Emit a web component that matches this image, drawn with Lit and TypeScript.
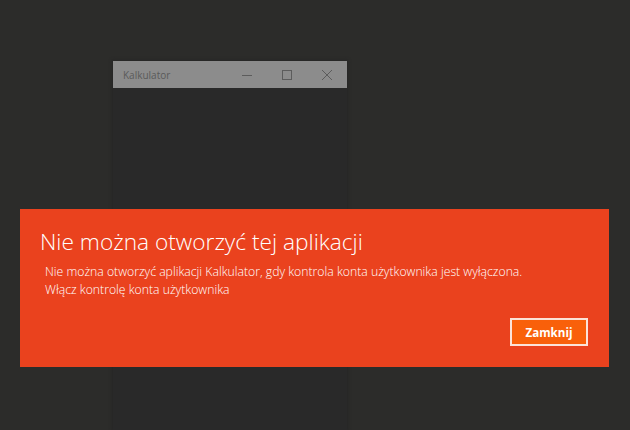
import {css, html, LitElement} from "lit";
import {customElement} from "lit/decorators.js";

@customElement("app-root")
export class AppRoot extends LitElement {
  static styles = css`
    :host {
      display: block;
      position: relative;
      width: 630px;
      height: 430px;
      overflow: hidden;
      background: #2c2c2a;
      font-family: "Open Sans", "Noto Sans", sans-serif;
    }

    /* the calculator window behind the banner */
    .window {
      position: absolute;
      left: 113px;
      top: 61px;
      width: 234px;
      height: 369px;
      background: #292929;
      box-shadow: 0 0 3px 1px #252525;
    }

    .titlebar {
      display: flex;
      align-items: center;
      height: 27px;
      background: #8c8c8c;
      color: #5a5a5a;
      font-size: 10px;
      padding-left: 10px;
    }

    .title {
      flex: 1;
    }

    .caption {
      display: block;
      width: 40px;
      height: 12px;
      stroke: #5c5c5c;
      fill: none;
    }

    .banner {
      position: absolute;
      left: 20px;
      top: 209px;
      width: 589px;
      height: 158px;
      box-sizing: border-box;
      padding: 18px 21px 0 20px;
      background: #ea421e;
      color: #fff;
      display: flex;
      flex-direction: column;
    }

    h1 {
      margin: 0;
      font-size: 22.7px;
      font-weight: 300;
      line-height: 30px;
    }

    .body {
      margin: 6px 0 0 5px;
      font-size: 12.22px;
      line-height: 18px;
      font-weight: 300;
      color: #fff;
    }

    .actions {
      display: flex;
      justify-content: flex-end;
      margin-top: auto;
      padding-bottom: 21px;
    }

    button {
      width: 78px;
      height: 28px;
      box-sizing: border-box;
      border: 2px solid #fbe3d8;
      background: #f9600a;
      color: #fff;
      font-family: inherit;
      font-size: 11.6px;
      font-weight: 700;
      padding: 0;
    }
  `;

  render() {
    return html`
      <div class="window">
        <div class="titlebar">
          <span class="title">Kalkulator</span>
          <svg class="caption" viewBox="0 0 40 12"><path d="M15 6.5h10"/></svg>
          <svg class="caption" viewBox="0 0 40 12"><rect x="15.5" y="1.5" width="9" height="9"/></svg>
          <svg class="caption" viewBox="0 0 40 12"><path d="M15 1l10 10M25 1L15 11"/></svg>
        </div>
      </div>
      <div class="banner">
        <h1>Nie można otworzyć tej aplikacji</h1>
        <div class="body">
          Nie można otworzyć aplikacji Kalkulator, gdy kontrola konta użytkownika jest wyłączona.<br />
          Włącz kontrolę konta użytkownika
        </div>
        <div class="actions"><button>Zamknij</button></div>
      </div>
    `;
  }
}
